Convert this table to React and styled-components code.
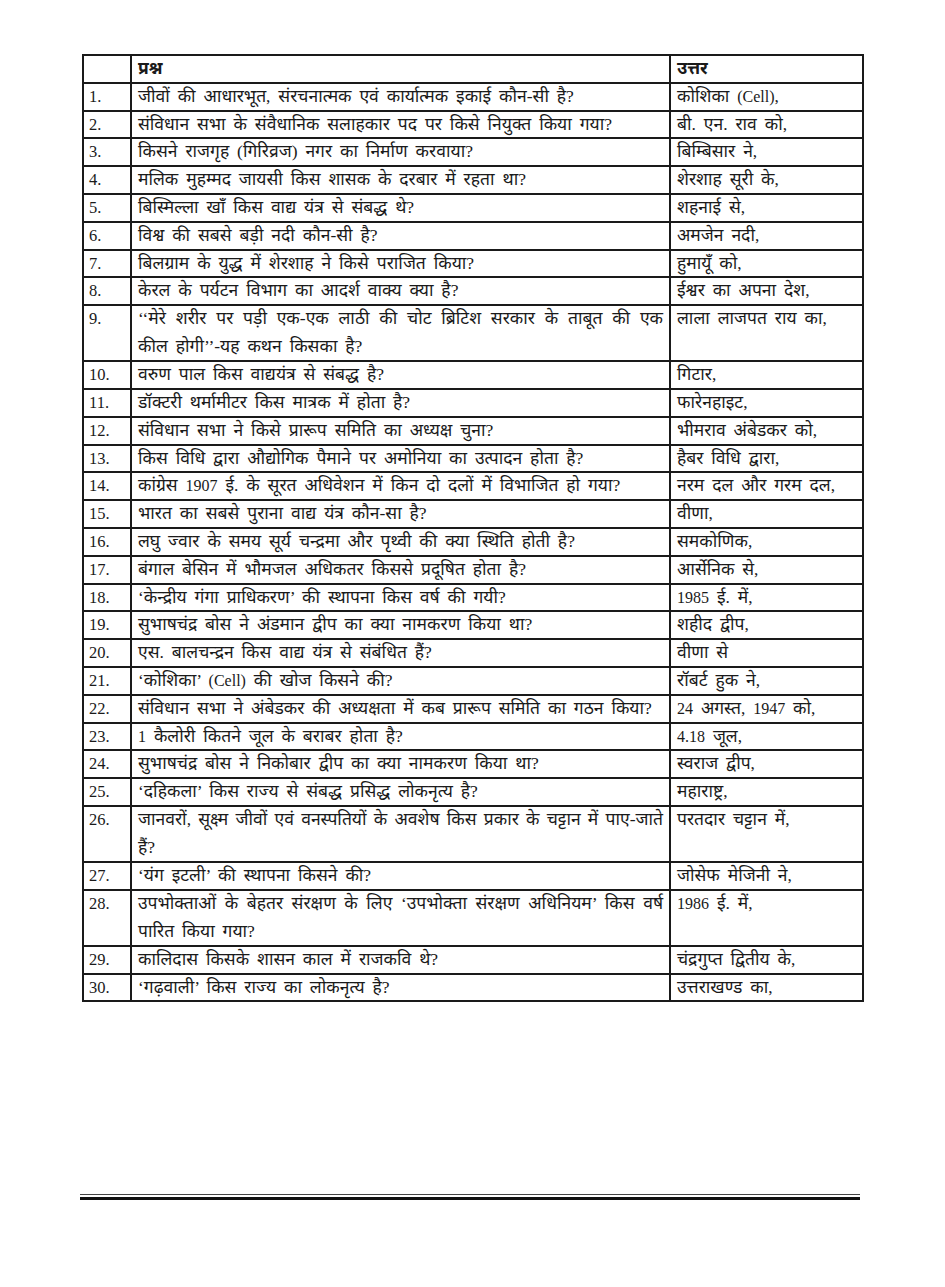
import React from "react";
import styled, { createGlobalStyle } from "styled-components";

const Global = createGlobalStyle`
  html, body { margin: 0; padding: 0; background: #fff; }
  body { font-family: "Liberation Serif", "Noto Sans Devanagari", "Lohit Devanagari", "FreeSerif", serif; color: #1a1a1a; }
`;

const Page = styled.div`
  width: 945px;
  height: 1287px;
  box-sizing: border-box;
  padding: 54px 0 0 82px;
  display: flex;
  flex-direction: column;
`;

const Table = styled.table`
  width: 780px;
  border-collapse: collapse;
  table-layout: fixed;
  border: 2px solid #1a1a1a;
`;

const Row = styled.tr`
  height: ${(p) => (p.$lines > 1 ? 56 : 27.8)}px;
`;

const Cell = styled.td`
  border: 2px solid #1a1a1a;
  padding: 0 6px 0 ${(p) => (p.$num ? "5px" : "6px")};
  height: inherit;
  box-sizing: border-box;
  font-size: ${(p) => (p.$num ? "16.5px" : "17.5px")};
  line-height: 25.8px;
  word-spacing: ${(p) => (p.$num ? "0" : "3.5px")};
  vertical-align: top;
  font-weight: ${(p) => (p.$head ? 700 : 400)};
  white-space: nowrap;
  overflow: hidden;
`;

const Line = styled.span`
  display: block;
  text-align: justify;
  text-align-last: ${(p) => (p.$full ? "justify" : "left")};
  white-space: normal;
  word-spacing: ${(p) => (p.$full ? "0" : "3.5px")};
  padding-top: ${(p) => (p.$second ? "2px" : "0")};
`;

const Latin = styled.span`
  font-size: 16px;
  line-height: 1;
`;

const Rule = styled.div`
  width: 780px;
  margin-top: 192px;
  margin-left: -2px;
  border-top: 1.5px solid #444;
  padding-top: 2px;
  &::after {
    content: "";
    display: block;
    height: 3px;
    background: #111;
  }
`;

const rows = [
  [["जीवों की आधारभूत, संरचनात्मक एवं कार्यात्मक इकाई कौन-सी है?"], "कोशिका |(Cell)|,"],
  [["संविधान सभा के संवैधानिक सलाहकार पद पर किसे नियुक्त किया गया?"], "बी. एन. राव को,"],
  [["किसने राजगृह (गिरिव्रज) नगर का निर्माण करवाया?"], "बिम्बिसार ने,"],
  [["मलिक मुहम्मद जायसी किस शासक के दरबार में रहता था?"], "शेरशाह सूरी के,"],
  [["बिस्मिल्ला खाँ किस वाद्य यंत्र से संबद्ध थे?"], "शहनाई से,"],
  [["विश्व की सबसे बड़ी नदी कौन-सी है?"], "अमजेन नदी,"],
  [["बिलग्राम के युद्ध में शेरशाह ने किसे पराजित किया?"], "हुमायूँ को,"],
  [["केरल के पर्यटन विभाग का आदर्श वाक्य क्या है?"], "ईश्वर का अपना देश,"],
  [["‘‘मेरे शरीर पर पड़ी एक-एक लाठी की चोट ब्रिटिश सरकार के ताबूत की एक", "कील होगी’’-यह कथन किसका है?"], "लाला लाजपत राय का,"],
  [["वरुण पाल किस वाद्ययंत्र से संबद्ध है?"], "गिटार,"],
  [["डॉक्टरी थर्मामीटर किस मात्रक में होता है?"], "फारेनहाइट,"],
  [["संविधान सभा ने किसे प्रारूप समिति का अध्यक्ष चुना?"], "भीमराव अंबेडकर को,"],
  [["किस विधि द्वारा औद्योगिक पैमाने पर अमोनिया का उत्पादन होता है?"], "हैबर विधि द्वारा,"],
  [["कांग्रेस |1907| ई. के सूरत अधिवेशन में किन दो दलों में विभाजित हो गया?"], "नरम दल और गरम दल,"],
  [["भारत का सबसे पुराना वाद्य यंत्र कौन-सा है?"], "वीणा,"],
  [["लघु ज्वार के समय सूर्य चन्द्रमा और पृथ्वी की क्या स्थिति होती है?"], "समकोणिक,"],
  [["बंगाल बेसिन में भौमजल अधिकतर किससे प्रदूषित होता है?"], "आर्सेनिक से,"],
  [["‘केन्द्रीय गंगा प्राधिकरण’ की स्थापना किस वर्ष की गयी?"], "|1985| ई. में,"],
  [["सुभाषचंद्र बोस ने अंडमान द्वीप का क्या नामकरण किया था?"], "शहीद द्वीप,"],
  [["एस. बालचन्द्रन किस वाद्य यंत्र से संबंधित हैं?"], "वीणा से"],
  [["‘कोशिका’ |(Cell)| की खोज किसने की?"], "रॉबर्ट हुक ने,"],
  [["संविधान सभा ने अंबेडकर की अध्यक्षता में कब प्रारूप समिति का गठन किया?"], "|24| अगस्त, |1947| को,"],
  [["|1| कैलोरी कितने जूल के बराबर होता है?"], "|4.18| जूल,"],
  [["सुभाषचंद्र बोस ने निकोबार द्वीप का क्या नामकरण किया था?"], "स्वराज द्वीप,"],
  [["‘दहिकला’ किस राज्य से संबद्ध प्रसिद्ध लोकनृत्य है?"], "महाराष्ट्र,"],
  [["जानवरों, सूक्ष्म जीवों एवं वनस्पतियों के अवशेष किस प्रकार के चट्टान में पाए-जाते", "हैं?"], "परतदार चट्टान में,"],
  [["‘यंग इटली’ की स्थापना किसने की?"], "जोसेफ मेजिनी ने,"],
  [["उपभोक्ताओं के बेहतर संरक्षण के लिए ‘उपभोक्ता संरक्षण अधिनियम’ किस वर्ष", "पारित किया गया?"], "|1986| ई. में,"],
  [["कालिदास किसके शासन काल में राजकवि थे?"], "चंद्रगुप्त द्वितीय के,"],
  [["‘गढ़वाली’ किस राज्य का लोकनृत्य है?"], "उत्तराखण्ड का,"],
];

function Text({ value }) {
  return value.split("|").map((part, k) =>
    k % 2 ? <Latin key={k}>{part}</Latin> : <React.Fragment key={k}>{part}</React.Fragment>
  );
}

export default function App() {
  return (
    <>
      <Global />
      <Page>
        <Table>
          <colgroup>
            <col style={{ width: "48px" }} />
            <col style={{ width: "539px" }} />
            <col style={{ width: "193px" }} />
          </colgroup>
          <thead>
            <Row $lines={1}>
              <Cell $num />
              <Cell $head>प्रश्न</Cell>
              <Cell $head>उत्तर</Cell>
            </Row>
          </thead>
          <tbody>
            {rows.map(([q, a], i) => (
              <Row key={i} $lines={q.length}>
                <Cell $num>{i + 1}.</Cell>
                <Cell>
                  {q.map((l, j) => (
                    <Line key={j} $full={j < q.length - 1} $second={j > 0}>
                      <Text value={l} />
                    </Line>
                  ))}
                </Cell>
                <Cell>
                  <Text value={a} />
                </Cell>
              </Row>
            ))}
          </tbody>
        </Table>
        <Rule />
      </Page>
    </>
  );
}
